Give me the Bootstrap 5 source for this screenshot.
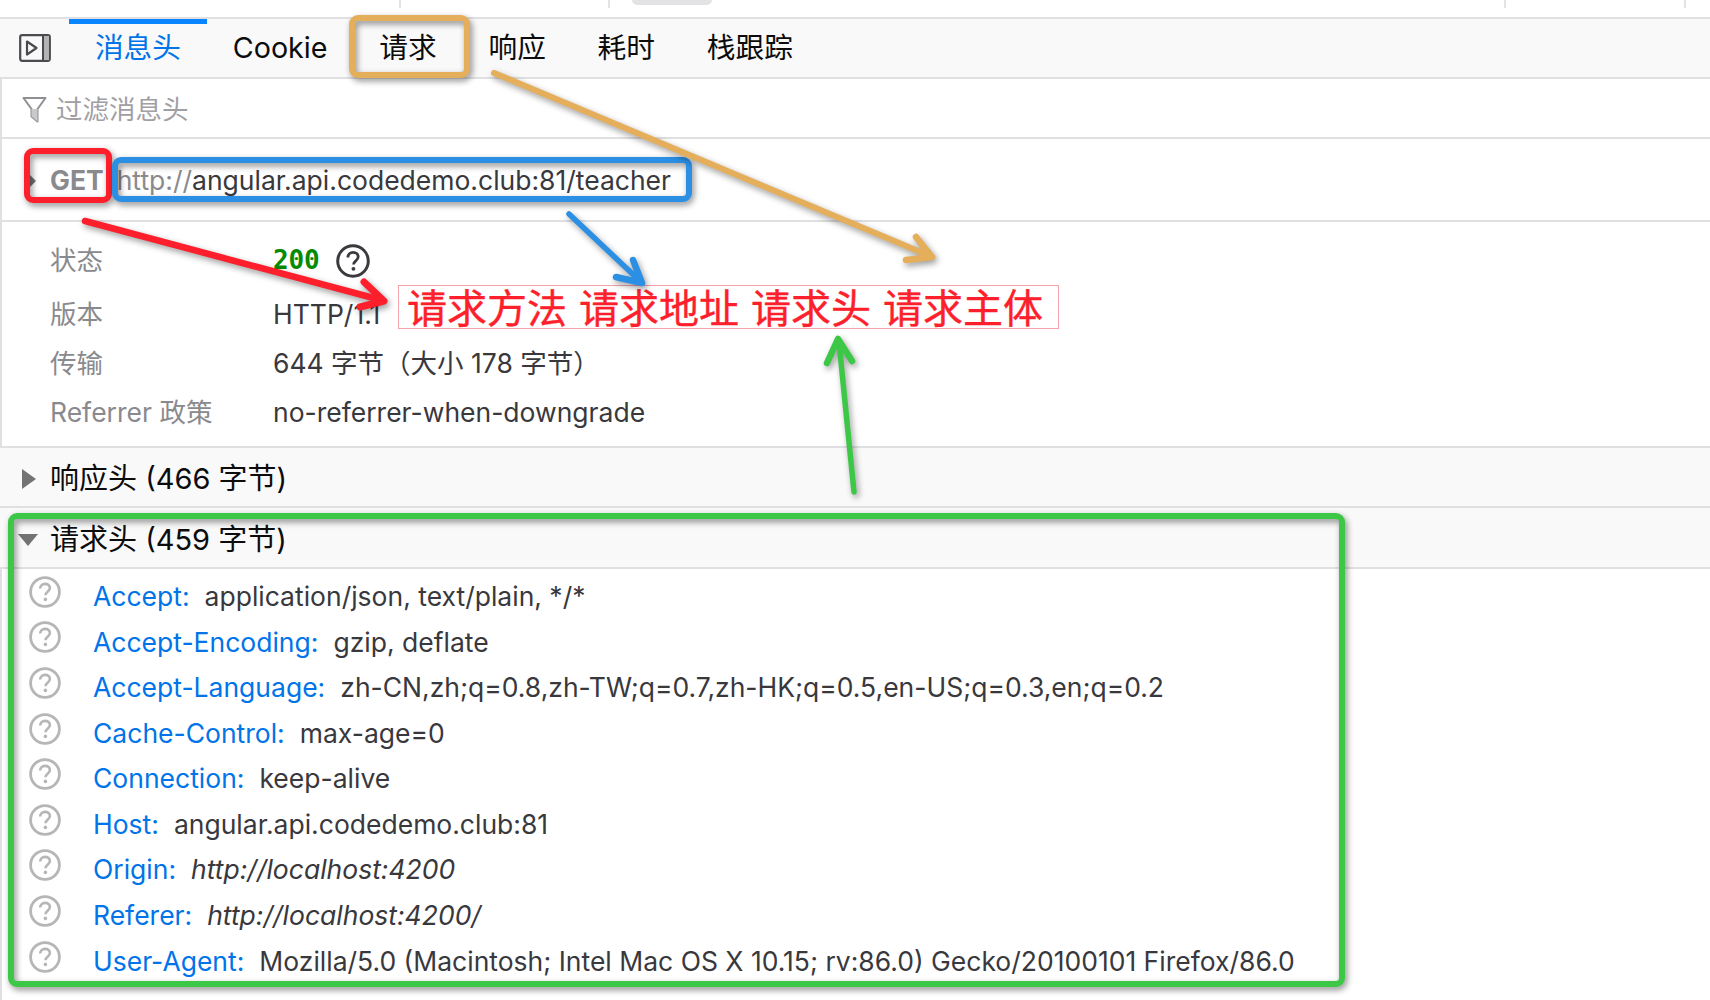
<!DOCTYPE html>
<html lang="zh-CN">
<head>
<meta charset="utf-8">
<title>消息头</title>
<link href="https://cdn.jsdelivr.net/npm/bootstrap@5.3.0/dist/css/bootstrap.min.css" rel="stylesheet">
<style>
html,body{height:100%;overflow:hidden;background:#fff}
body{font-family:Inter,"Noto Sans CJK SC",sans-serif;font-size:26.5px;color:#38383d}
.dt-stage{height:1000px;width:1710px;border-left:2px solid #e0e0e2}
.dt-strip{height:17px;margin-left:-2px;background:#fff}
.dt-tick{width:2px;height:8px;background:#e4e4e6}
.dt-tick-a{margin-left:399px}
.dt-tick-b{margin-left:207px}
.dt-pill{width:80px;height:5px;background:#e3e3e5;border-radius:0 0 5px 5px;margin-left:22px}
.dt-tick-c{margin-left:792px}
.dt-tick-d{margin-left:178px}
.dt-toolbar{height:62px;background:#f9f9fa;border-top:2px solid #e0e0e2;border-bottom:2px solid #e0e0e2;margin-left:-2px;padding-left:2px}
.dt-tog{width:32px;height:28px;margin-left:17px;margin-right:18px;flex:none}
.dt-tab.nav-link{position:relative;padding:0 25.9px;font-size:28.7px;color:#0c0c0d;line-height:58px}
.dt-tab.nav-link.active{color:#0074e8}
.dt-tab.nav-link.active::before{content:"";position:absolute;left:0;right:0;top:0;height:5px;background:#0a84ff}
.dt-filter{height:60px;border-bottom:2px solid #e0e0e2;color:#a0a0a4;margin-left:-2px;padding:3px 0 0 22px}
.dt-funnel{width:25px;height:27px;margin-right:9px}
.dt-url{height:83px;border-bottom:2px solid #e0e0e2;margin-left:-2px;padding:2px 0 0 30px}
.dt-caret-sm{width:0;height:0;border-left:6px solid #737373;border-top:6px solid transparent;border-bottom:6px solid transparent;margin-right:14px}
.dt-method{font-weight:700;color:#8a8a8e;margin-right:13px}
.dt-proto{color:#8a8a8e}
.dt-status{height:226px;border-bottom:2px solid #e0e0e2;padding:14px 0 0 50px;margin-left:-2px}
.dt-srow{height:49px}
.dt-srow:first-child{margin-bottom:5px}
.dt-skey{width:223px;color:#8a8a8e;flex:none}
.dt-code{font-family:"DejaVu Sans Mono",monospace;font-weight:700;color:#058b00;font-size:26px;letter-spacing:-.2px}
.dt-help{width:34px;height:34px;margin-left:17px;color:#3a3a3f}
.dt-head{background:#f9f9fa;border-bottom:2px solid #e0e0e2;color:#0c0c0d;font-size:29px;margin-left:-2px;padding:4px 0 0 22px}
.dt-head-a{height:60px}
.dt-head-b{height:61px;padding-left:18px}
.dt-tri-r{width:0;height:0;border-left:14px solid #737373;border-top:10px solid transparent;border-bottom:10px solid transparent;margin-right:14px}
.dt-tri-d{width:0;height:0;border-top:12px solid #737373;border-left:10px solid transparent;border-right:10px solid transparent;margin-right:12px}
.dt-hlist{padding:5px 0 0;margin:0;list-style:none}
.dt-hrow{height:45.6px;padding-left:27px}
.dt-qm{width:32px;height:32px;flex:none;margin-right:32px;margin-top:-10px;color:#b6b6b8}
.dt-name{color:#0074e8;margin-right:15px}
.dt-ital{font-style:italic}
.dt-box{position:absolute;border-style:solid;border-width:6px;border-radius:9px;filter:drop-shadow(2px 3px 3px rgba(0,0,0,.45));pointer-events:none}
.dt-box-orange{left:347px;top:15px;width:121px;height:63px;border-color:#e5ae5b}
.dt-box-red{left:22px;top:148px;width:88px;height:55px;border-color:#fd1f2c}
.dt-box-blue{left:110px;top:157px;width:580px;height:45px;border-color:#2b8fe3}
.dt-box-green{left:6px;top:513px;width:1337px;height:474px;border-color:#3cc846}
.dt-arrows{position:absolute;left:-2px;top:0;width:1710px;height:1000px;pointer-events:none;filter:drop-shadow(2px 3px 3px rgba(0,0,0,.4))}
.dt-note{position:absolute;left:396px;top:285px;width:661px;height:44px;border:1px solid #f6a3ab;background:#fff;color:#fd1f2c;font-size:40px;line-height:40px;padding-left:8px;white-space:nowrap;font-family:"Noto Sans CJK SC",sans-serif;word-spacing:3px;-webkit-text-stroke:.4px #fd1f2c}
</style>
</head>
<body>
<svg width="0" height="0" class="position-absolute">
<symbol id="dt-q" viewBox="0 0 32 32">
<circle cx="16" cy="16" r="14.4" fill="none" stroke="currentColor" stroke-width="2.8"/>
<path d="M11.2 12.6c0-2.9 2.1-4.7 4.9-4.7 2.8 0 4.8 1.7 4.8 4.2 0 3.7-4.4 3.8-4.4 7.2" fill="none" stroke="currentColor" stroke-width="2.6"/>
<circle cx="16.4" cy="23.4" r="1.8" fill="currentColor"/>
</symbol>
</svg>
<div class="position-relative dt-stage">
  <div class="dt-strip d-flex align-items-start">
    <span class="dt-tick dt-tick-a"></span><span class="dt-tick dt-tick-b"></span><span class="dt-pill"></span><span class="dt-tick dt-tick-c"></span><span class="dt-tick dt-tick-d"></span>
  </div>
  <div class="dt-toolbar d-flex align-items-center">
    <svg class="dt-tog" viewBox="0 0 32 28" fill="none"><rect x="1.2" y="1.2" width="29.6" height="25.6" rx="2" stroke="#4a4a4f" stroke-width="2.2"/><rect x="24" y="2" width="6" height="24" fill="#b4b4b7"/><path d="M24 2v24" stroke="#4a4a4f" stroke-width="2"/><path d="M8 7.5 17.5 14 8 20.5z" stroke="#4a4a4f" stroke-width="2.2" stroke-linejoin="round"/></svg>
    <ul class="nav flex-nowrap">
      <li class="nav-item"><a class="nav-link dt-tab active" href="#">消息头</a></li>
      <li class="nav-item"><a class="nav-link dt-tab" href="#">Cookie</a></li>
      <li class="nav-item"><a class="nav-link dt-tab" href="#">请求</a></li>
      <li class="nav-item"><a class="nav-link dt-tab" href="#">响应</a></li>
      <li class="nav-item"><a class="nav-link dt-tab" href="#">耗时</a></li>
      <li class="nav-item"><a class="nav-link dt-tab" href="#">栈跟踪</a></li>
    </ul>
  </div>
  <div class="dt-filter d-flex align-items-center">
    <svg class="dt-funnel" viewBox="0 0 25 27"><path d="M1.5 2h22l-8 11v12.5l-6-5V13z" fill="#fff" stroke="#8f8f93" stroke-width="2" stroke-linejoin="round"/><path d="M9.5 13h6v12.5l-6-5z" fill="#c9c9cb"/></svg>
    <span>过滤消息头</span>
  </div>
  <div class="dt-url d-flex align-items-center">
    <span class="dt-caret-sm"></span>
    <span class="dt-method">GET</span>
    <span><span class="dt-proto">http://</span>angular.api.codedemo.club:81/teacher</span>
  </div>
  <div class="dt-status">
    <div class="dt-srow d-flex align-items-center"><span class="dt-skey">状态</span><span class="dt-code">200</span><svg class="dt-help"><use href="#dt-q"/></svg></div>
    <div class="dt-srow d-flex align-items-center"><span class="dt-skey">版本</span><span>HTTP/1.1</span></div>
    <div class="dt-srow d-flex align-items-center"><span class="dt-skey">传输</span><span>644 字节（大小 178 字节）</span></div>
    <div class="dt-srow d-flex align-items-center"><span class="dt-skey">Referrer 政策</span><span>no-referrer-when-downgrade</span></div>
  </div>
  <div class="dt-head dt-head-a d-flex align-items-center"><span class="dt-tri-r"></span><span>响应头 (466 字节)</span></div>
  <div class="dt-head dt-head-b d-flex align-items-center"><span class="dt-tri-d"></span><span>请求头 (459 字节)</span></div>
  <ul class="dt-hlist">
    <li class="dt-hrow d-flex align-items-center text-nowrap"><svg class="dt-qm"><use href="#dt-q"/></svg><span class="dt-name">Accept:</span><span>application/json, text/plain, */*</span></li>
    <li class="dt-hrow d-flex align-items-center text-nowrap"><svg class="dt-qm"><use href="#dt-q"/></svg><span class="dt-name">Accept-Encoding:</span><span>gzip, deflate</span></li>
    <li class="dt-hrow d-flex align-items-center text-nowrap"><svg class="dt-qm"><use href="#dt-q"/></svg><span class="dt-name">Accept-Language:</span><span>zh-CN,zh;q=0.8,zh-TW;q=0.7,zh-HK;q=0.5,en-US;q=0.3,en;q=0.2</span></li>
    <li class="dt-hrow d-flex align-items-center text-nowrap"><svg class="dt-qm"><use href="#dt-q"/></svg><span class="dt-name">Cache-Control:</span><span>max-age=0</span></li>
    <li class="dt-hrow d-flex align-items-center text-nowrap"><svg class="dt-qm"><use href="#dt-q"/></svg><span class="dt-name">Connection:</span><span>keep-alive</span></li>
    <li class="dt-hrow d-flex align-items-center text-nowrap"><svg class="dt-qm"><use href="#dt-q"/></svg><span class="dt-name">Host:</span><span>angular.api.codedemo.club:81</span></li>
    <li class="dt-hrow d-flex align-items-center text-nowrap"><svg class="dt-qm"><use href="#dt-q"/></svg><span class="dt-name">Origin:</span><span class="dt-ital">http://localhost:4200</span></li>
    <li class="dt-hrow d-flex align-items-center text-nowrap"><svg class="dt-qm"><use href="#dt-q"/></svg><span class="dt-name">Referer:</span><span class="dt-ital">http://localhost:4200/</span></li>
    <li class="dt-hrow d-flex align-items-center text-nowrap"><svg class="dt-qm"><use href="#dt-q"/></svg><span class="dt-name">User-Agent:</span><span>Mozilla/5.0 (Macintosh; Intel Mac OS X 10.15; rv:86.0) Gecko/20100101 Firefox/86.0</span></li>
  </ul>
  <div class="dt-note">请求方法 请求地址 请求头 请求主体</div>
  <div class="dt-box dt-box-orange"></div>
  <div class="dt-box dt-box-red"></div>
  <div class="dt-box dt-box-blue"></div>
  <div class="dt-box dt-box-green"></div>
  <svg class="dt-arrows" viewBox="0 0 1710 1000" fill="none" stroke-linecap="round" stroke-linejoin="round">
    <g stroke="#e5ae5b" stroke-width="6"><path d="M494 73 930 256"/><path d="M916 237 932 257 906 260" stroke-width="6.5"/></g>
    <g stroke="#fd1f2c" stroke-width="6.5"><path d="M85 221 381 300"/><path d="M364 282 384 301 360 307" stroke-width="7"/></g>
    <g stroke="#2b8fe3" stroke-width="5.5"><path d="M569 214 640 281"/><path d="M633 260 642 283 616 277" stroke-width="6.5"/></g>
    <g stroke="#3cc846" stroke-width="5.5"><path d="M854 492 839 342"/><path d="M827 363 838 339 852 361" stroke-width="6.5"/></g>
  </svg>
</div>
<script src="https://cdn.jsdelivr.net/npm/bootstrap@5.3.0/dist/js/bootstrap.bundle.min.js"></script>
</body>
</html>
